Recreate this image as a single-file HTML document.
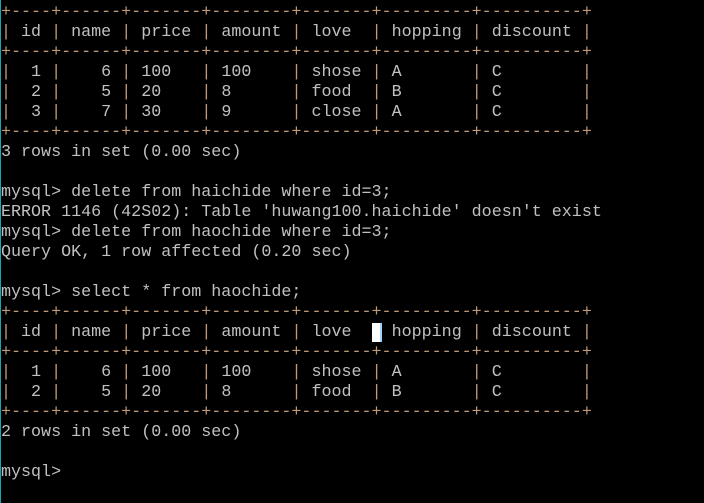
<!DOCTYPE html>
<html><head><meta charset="utf-8"><style>
html,body{margin:0;padding:0;background:#000;width:704px;height:503px;overflow:hidden}
body{position:relative}
pre{margin:0;position:absolute;left:1px;top:3px;font-family:"Liberation Mono","DejaVu Sans Mono",monospace;font-size:16.7px;line-height:20px;color:#c0c0c0;white-space:pre}
.b{color:#c09a78}
.cur{background:#fff;color:#fff;box-shadow:-2px 0 0 #9cd4ff inset}
.edge{position:absolute;left:0;top:0;width:1px;height:503px;background:#1aa6b0}
</style></head><body>
<pre><span class="b">+----+------+-------+--------+-------+---------+----------+</span>
<span class="b">|</span> id <span class="b">|</span> name <span class="b">|</span> price <span class="b">|</span> amount <span class="b">|</span> love  <span class="b">|</span> hopping <span class="b">|</span> discount <span class="b">|</span>
<span class="b">+----+------+-------+--------+-------+---------+----------+</span>
<span class="b">|</span>  1 <span class="b">|</span>    6 <span class="b">|</span> 100   <span class="b">|</span> 100    <span class="b">|</span> shose <span class="b">|</span> A       <span class="b">|</span> C        <span class="b">|</span>
<span class="b">|</span>  2 <span class="b">|</span>    5 <span class="b">|</span> 20    <span class="b">|</span> 8      <span class="b">|</span> food  <span class="b">|</span> B       <span class="b">|</span> C        <span class="b">|</span>
<span class="b">|</span>  3 <span class="b">|</span>    7 <span class="b">|</span> 30    <span class="b">|</span> 9      <span class="b">|</span> close <span class="b">|</span> A       <span class="b">|</span> C        <span class="b">|</span>
<span class="b">+----+------+-------+--------+-------+---------+----------+</span>
3 rows in set (0.00 sec)

mysql&gt; delete from haichide where id=3;
ERROR 1146 (42S02): Table 'huwang100.haichide' doesn't exist
mysql&gt; delete from haochide where id=3;
Query OK, 1 row affected (0.20 sec)

mysql&gt; select * from haochide;
<span class="b">+----+------+-------+--------+-------+---------+----------+</span>
<span class="b">|</span> id <span class="b">|</span> name <span class="b">|</span> price <span class="b">|</span> amount <span class="b">|</span> love  <span class="cur">|</span> hopping <span class="b">|</span> discount <span class="b">|</span>
<span class="b">+----+------+-------+--------+-------+---------+----------+</span>
<span class="b">|</span>  1 <span class="b">|</span>    6 <span class="b">|</span> 100   <span class="b">|</span> 100    <span class="b">|</span> shose <span class="b">|</span> A       <span class="b">|</span> C        <span class="b">|</span>
<span class="b">|</span>  2 <span class="b">|</span>    5 <span class="b">|</span> 20    <span class="b">|</span> 8      <span class="b">|</span> food  <span class="b">|</span> B       <span class="b">|</span> C        <span class="b">|</span>
<span class="b">+----+------+-------+--------+-------+---------+----------+</span>
2 rows in set (0.00 sec)

mysql&gt;</pre>
<div class="edge"></div>
</body></html>
